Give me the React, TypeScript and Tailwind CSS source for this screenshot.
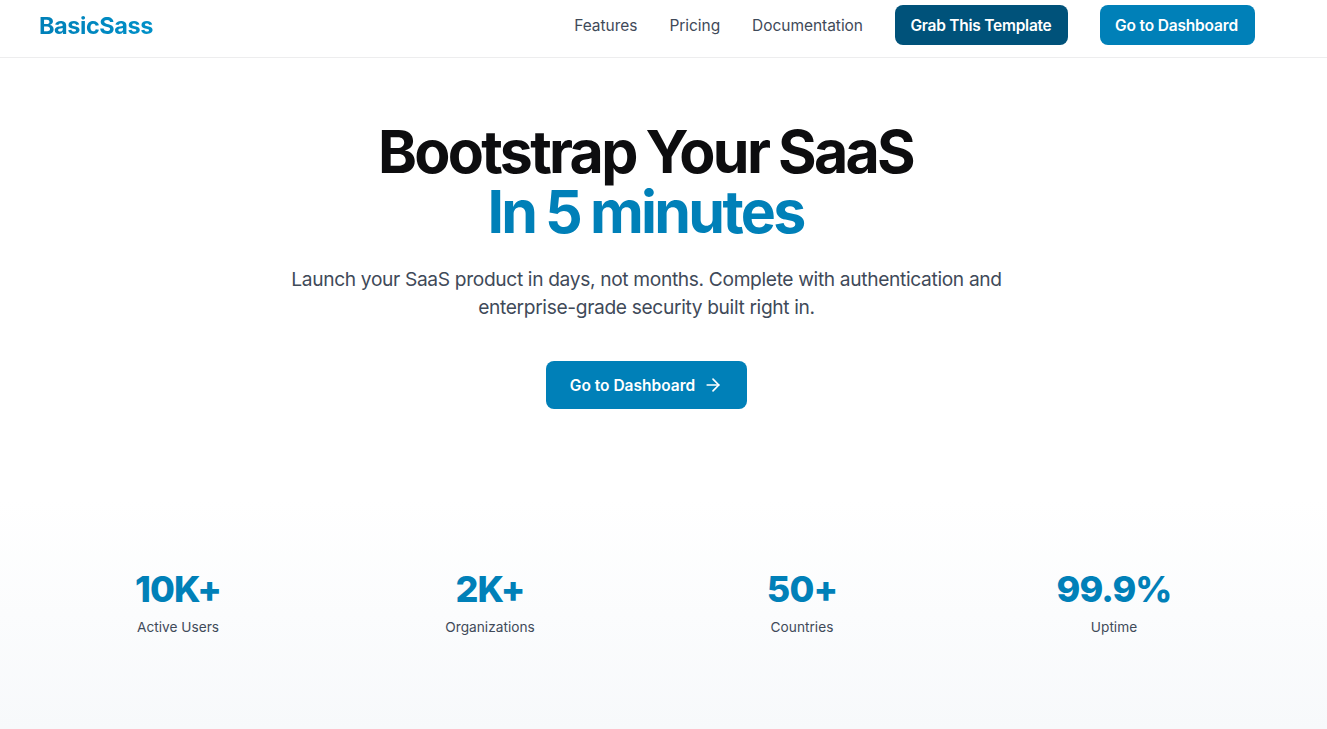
import React from 'react';
import { ArrowRight } from 'lucide-react';

const navLinks = ['Features', 'Pricing', 'Documentation'];

const stats = [
  { label: 'Active Users', value: '10K+' },
  { label: 'Organizations', value: '2K+' },
  { label: 'Countries', value: '50+' },
  { label: 'Uptime', value: '99.9%' },
];

const Navbar: React.FC = () => (
  <header className="flex h-[58px] items-start justify-between border-b border-[#ededee] bg-white pt-[5px] pr-[72px] pl-[39px]">
    <span className="bg-gradient-to-r from-[#0080b8] to-[#0090c8] bg-clip-text text-[23.5px] leading-[42px] font-[750] tracking-[-0.45px] text-transparent">
      BasicSass
    </span>
    <nav className="flex items-center gap-8 text-[15.5px]">
      {navLinks.map((link) => (
        <a key={link} href="#" className="pt-0.5 tracking-[-0.04px] text-[#3f4a59]">
          {link}
        </a>
      ))}
      <button className="h-10 w-[173px] rounded-lg bg-[#00527a] pt-0.5 pr-px font-[580] tracking-[-0.25px] whitespace-nowrap text-white">
        Grab This Template
      </button>
      <button className="h-10 w-[155px] rounded-lg bg-[#0080b8] pt-0.5 pr-0.5 font-[580] tracking-[-0.17px] whitespace-nowrap text-white">
        Go to Dashboard
      </button>
    </nav>
  </header>
);

const Hero: React.FC = () => (
  <section className="flex flex-col items-center pt-16 pr-[34px] text-center">
    <h1 className="pr-[2px] text-[59px] leading-[60px] font-[750] tracking-[-2.7px] text-[#0d0d0f] [font-variation-settings:'opsz'_32] [word-spacing:-1.5px]">
      Bootstrap Your SaaS
      <span className="block text-[#0080b8]">In 5 minutes</span>
    </h1>
    <p className="mt-[23px] w-[768px] text-[19.2px] leading-7 tracking-[-0.35px] text-[#3f4a59]">
      Launch your SaaS product in days, not months. Complete with authentication and enterprise-grade security built right in.
    </p>
    <button className="mt-10 flex h-12 w-[201px] items-center justify-center gap-2 rounded-lg bg-[#0080b8] text-[15.5px] font-semibold text-white">
      <span className="pt-0.5">Go to Dashboard</span>
      <ArrowRight className="h-5 w-5" />
    </button>
  </section>
);

const Stats: React.FC = () => (
  <section className="grid grid-cols-4 gap-8 pt-[160px] pr-[73px] pl-[38px] text-center">
    {stats.map((stat) => (
      <div key={stat.label}>
        <div className="text-4xl font-[770] tracking-[-0.9px] text-[#0080b8]">{stat.value}</div>
        <div className="mt-2 text-[13.7px] leading-5 text-[#3f4a59]">{stat.label}</div>
      </div>
    ))}
  </section>
);

export default function App() {
  return (
    <div className="h-[729px] overflow-hidden bg-white bg-[linear-gradient(to_bottom,#ffffff_500px,#f7f9fb_729px)] font-['Inter',sans-serif]">
      <Navbar />
      <main>
        <Hero />
        <Stats />
      </main>
    </div>
  );
}
